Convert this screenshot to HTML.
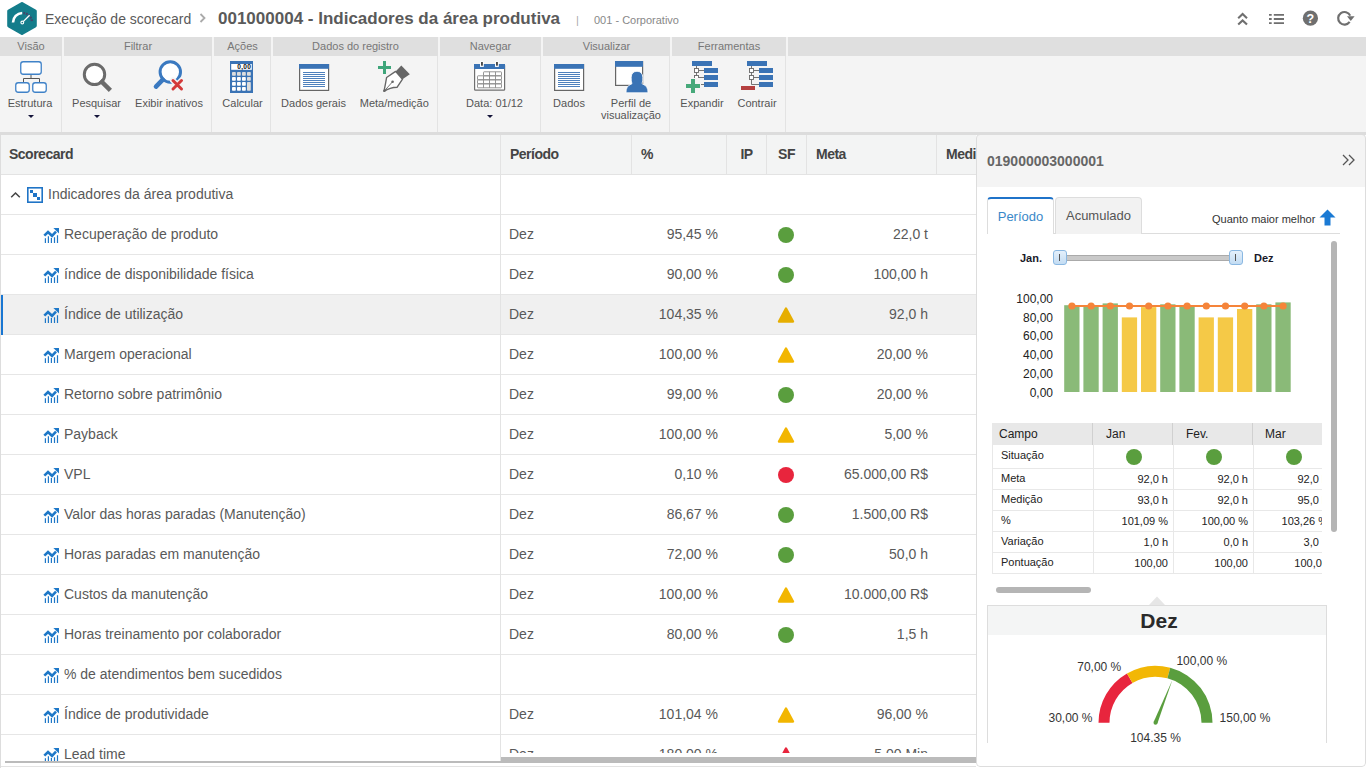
<!DOCTYPE html>
<html><head><meta charset="utf-8">
<style>
*{box-sizing:border-box;margin:0;padding:0}
html,body{width:1366px;height:768px;overflow:hidden;background:#fff;font-family:"Liberation Sans",sans-serif;position:relative}
.abs{position:absolute}
.t{position:absolute;white-space:nowrap;line-height:1}
#hdr{position:absolute;left:0;top:0;width:1366px;height:37px;background:#fff}
#rib{position:absolute;left:0;top:37px;width:1366px;height:98px;background:#f4f4f4;border-bottom:3px solid #dcdcdc;z-index:2}
.lab{position:absolute;top:0;height:19px;background:#dfdfdf;color:#777;font-size:11px;text-align:center;line-height:19px;white-space:nowrap}
.sep{position:absolute;top:19px;height:76px;width:1px;background:#e3e3e3}
.bl{position:absolute;top:61px;transform:translateX(-50%);text-align:center;color:#555;font-size:11px;line-height:11.5px;white-space:nowrap}
.caret{position:absolute;width:0;height:0;border-left:3px solid transparent;border-right:3px solid transparent;border-top:3px solid #14143a}
#tbl{position:absolute;left:0;top:134px;width:976px;height:634px;background:#fff;overflow:hidden;border-left:1px solid #ddd}
.hrow{position:absolute;left:-1px;top:0;width:977px;height:41px;background:#f3f4f4;border-bottom:1px solid #e3e3e3}
.hc{position:absolute;top:0;height:40px;line-height:40px;font-size:14px;font-weight:bold;color:#444;letter-spacing:-0.5px;padding-left:9px;white-space:nowrap}
.hsep{position:absolute;top:0;height:40px;width:1px;background:#e3e3e3}
.row{position:absolute;left:-1px;width:977px;height:40px;border-bottom:1px solid #e6e6e6;background:#fff}
.row.sel{background:#f0f0f0}
.row.sel::before{content:"";position:absolute;left:1px;top:0;width:2px;height:40px;background:#1976d2}
.vsep{position:absolute;left:500px;top:0;width:1px;height:40px;background:#e3e3e3}
.cell{position:absolute;top:-1px;height:40px;line-height:40px;font-size:14px;color:#595959;white-space:nowrap}
.cell.r{text-align:right}
.ic{left:43px;top:13px}
.dot{position:absolute;left:778px;top:12px;width:16px;height:16px;border-radius:50%}
.tri{left:777px;top:11px}
.sel .tri path{fill:#e6ae00;stroke:#e6ae00}
#pnl{position:absolute;left:976px;top:134px;width:390px;height:633px;background:#fff;border-radius:4px;overflow:hidden}
#pnl::after{content:"";position:absolute;left:0;top:0;right:0;bottom:0;border:1px solid #ddd;border-radius:4px;pointer-events:none}
.phdr{position:absolute;left:0;top:0;width:390px;height:53px;background:#f4f4f4}
.tabline{position:absolute;left:11px;top:99px;width:353px;height:1px;background:#ddd}
.tab{position:absolute;top:63px;height:37px;border:1px solid #ddd;border-bottom:none;border-radius:4px 4px 0 0;background:#f2f2f2;color:#555;font-size:13px;text-align:center;line-height:36px}
.tab.act{background:#fff;border-top:2px solid #1f73c9;color:#3a88c8;height:37px;line-height:35px}
.handle{position:absolute;top:116px;width:14px;height:15px;border:1px solid #8ab8e2;border-radius:3px;background:linear-gradient(#e4f0fb,#c3dcf3)}
.handle::after{content:"";position:absolute;left:5px;top:3px;width:1px;height:7px;background:#555}
.dt{position:absolute;left:16px;top:289px;width:330px;height:152px;overflow:hidden}
.dhr{position:absolute;left:0;top:0;width:340px;height:22px;background:#e8e8e8}
.dh{position:absolute;top:0;height:22px;line-height:22px;font-size:12px;color:#222;padding-left:8px;border-right:1px solid #d0d0d0}
.dh:first-child{padding-left:7px}
.drow{position:absolute;left:0;width:340px;border-bottom:1px solid #e8e8e8;border-left:1px solid #e8e8e8}
.dc{position:absolute;top:0;height:100%;font-size:11px;color:#222;white-space:nowrap;border-right:1px solid #e8e8e8;overflow:hidden}
.gdot{position:absolute;width:16px;height:16px;border-radius:50%;background:#5a9e3e}
.gbox{position:absolute;left:11px;top:471px;width:340px;height:138px;border:1px solid #ddd;border-bottom:none}
.ghdr{height:29px;background:#f4f5f5;text-align:center;font-size:21px;font-weight:bold;color:#2a2a2a;line-height:29px;padding-left:4px}
</style></head><body>
<div id="hdr">
  <svg class="abs" style="left:7px;top:2px" width="30" height="33" viewBox="0 0 30 33">
    <path d="M15 1.6 L28.2 9.2 L28.2 23.8 L15 31.4 L1.8 23.8 L1.8 9.2 Z" fill="#147d8b" stroke="#147d8b" stroke-linejoin="round" stroke-width="3.2"/>
    <path d="M6 20.5 A9.5 9.5 0 0 1 15.2 11" fill="none" stroke="#fff" stroke-width="2.6"/>
    <path d="M16.3 11.05 A9.5 9.5 0 0 1 25 19.8" fill="none" stroke="#43466a" stroke-width="2.4" stroke-dasharray="1.8 0.9"/>
    <path d="M16.2 19.6 L22.6 13.2" stroke="#fff" stroke-width="1.3"/>
    <circle cx="15.3" cy="20.5" r="1.4" fill="#147d8b" stroke="#fff" stroke-width="1.1"/>
  </svg>
  <div class="t" style="left:45px;top:12px;font-size:14px;color:#5a5a5a">Execução de scorecard</div>
  <svg class="abs" style="left:199px;top:13px" width="8" height="10" viewBox="0 0 8 10"><path d="M1.5 1 L5.5 5 L1.5 9" fill="none" stroke="#aaa" stroke-width="1.8"/></svg>
  <div class="t" style="left:218px;top:10px;font-size:17px;font-weight:bold;color:#5a5a5a">001000004 - Indicadores da área produtiva</div>
  <div class="t" style="left:576px;top:15px;font-size:11px;color:#aaa">|</div>
  <div class="t" style="left:594px;top:15px;font-size:11px;color:#888">001 - Corporativo</div>
  <!-- right icons -->
  <svg class="abs" style="left:1236px;top:11px" width="14" height="16" viewBox="0 0 14 16"><path d="M2.2 7.2 L6.6 3 L11 7.2 M2.2 13.6 L6.6 9.4 L11 13.6" fill="none" stroke="#6f6f6f" stroke-width="2.1"/></svg>
  <svg class="abs" style="left:1269px;top:13px" width="16" height="12" viewBox="0 0 16 12"><path d="M0 1.9 H2.7 M4.8 1.9 H15 M0 6 H2.7 M4.8 6 H15 M0 10.1 H2.7 M4.8 10.1 H15" stroke="#6f6f6f" stroke-width="1.9"/></svg>
  <svg class="abs" style="left:1302px;top:10px" width="17" height="17" viewBox="0 0 17 17"><circle cx="8.4" cy="8.2" r="7.6" fill="#6f6f6f"/><text x="8.4" y="12.8" text-anchor="middle" font-size="12.5" font-weight="bold" fill="#fff" font-family="Liberation Sans">?</text></svg>
  <svg class="abs" style="left:1334px;top:8px" width="22" height="20" viewBox="1334 8 22 20"><path d="M1349.66 21.91 A6.3 6.3 0 1 1 1350.2 15.64" fill="none" stroke="#6f6f6f" stroke-width="2.2"/><path d="M1347 16.3 L1354.6 16.3 L1350.8 21 Z" fill="#6f6f6f"/></svg>
</div>
<div id="rib">
  <!-- label bands -->
  <div class="lab" style="left:0px;width:62px">Visão</div>
  <div class="lab" style="left:64px;width:148px">Filtrar</div>
  <div class="lab" style="left:214px;width:57px">Ações</div>
  <div class="lab" style="left:273px;width:165px">Dados do registro</div>
  <div class="lab" style="left:440px;width:101px">Navegar</div>
  <div class="lab" style="left:543px;width:127px">Visualizar</div>
  <div class="lab" style="left:672px;width:114px">Ferramentas</div>
  <div class="lab" style="left:788px;width:578px"></div>
  <!-- separators -->
  <div class="sep" style="left:61px"></div>
  <div class="sep" style="left:211px"></div>
  <div class="sep" style="left:270px"></div>
  <div class="sep" style="left:437px"></div>
  <div class="sep" style="left:540px"></div>
  <div class="sep" style="left:669px"></div>
  <div class="sep" style="left:785px"></div>
  <!-- button labels -->
  <div class="bl" style="left:30px">Estrutura</div>
  <div class="caret" style="left:28px;top:78px"></div>
  <div class="bl" style="left:96.5px">Pesquisar</div>
  <div class="caret" style="left:94px;top:78px"></div>
  <div class="bl" style="left:169px">Exibir inativos</div>
  <div class="bl" style="left:242.5px">Calcular</div>
  <div class="bl" style="left:313.5px">Dados gerais</div>
  <div class="bl" style="left:394.3px">Meta/medição</div>
  <div class="bl" style="left:494.5px">Data: 01/12</div>
  <div class="caret" style="left:487px;top:78px"></div>
  <div class="bl" style="left:569px">Dados</div>
  <div class="bl" style="left:631px">Perfil de<br>visualização</div>
  <div class="bl" style="left:702px">Expandir</div>
  <div class="bl" style="left:757px">Contrair</div>
</div>
<!-- ribbon icons (absolute page coords) -->
<svg class="abs" style="left:0;top:56px;z-index:3" width="800" height="40" viewBox="0 56 800 40">
  <!-- Estrutura -->
  <g fill="#fff" stroke="#3f82c8" stroke-width="1.3">
    <rect x="20.75" y="61.75" width="20.5" height="12.5" rx="2.5"/>
    <rect x="15.75" y="82.75" width="13.5" height="9.5" rx="2.5"/>
    <rect x="32.75" y="82.75" width="13.5" height="9.5" rx="2.5"/>
  </g>
  <path d="M31 75 V78.5 M23.5 82 V78.5 H39.5 V82" fill="none" stroke="#555" stroke-width="1"/>
  <!-- Pesquisar -->
  <circle cx="94.5" cy="74.4" r="10.2" fill="#fff" stroke="#6b6b6b" stroke-width="3"/>
  <path d="M102 82 L108.8 88.8" stroke="#6b6b6b" stroke-width="4.5" stroke-linecap="square"/>
  <!-- Exibir inativos -->
  <circle cx="170.3" cy="72" r="10.2" fill="#fff" stroke="#3a79c0" stroke-width="3"/>
  <path d="M162.8 79.6 L156 86.6" stroke="#3a79c0" stroke-width="4.6" stroke-linecap="round"/>
  <path d="M173 80.5 L181.5 89 M181.5 80.5 L173 89" stroke="#f4f4f4" stroke-width="6" stroke-linecap="round"/>
  <path d="M173 80.5 L181.5 89 M181.5 80.5 L173 89" stroke="#d43a3a" stroke-width="3" stroke-linecap="round"/>
  <!-- Calcular -->
  <rect x="230" y="61" width="23" height="32" fill="#3a73b5"/>
  <rect x="231.2" y="64" width="20.6" height="5.8" fill="#fff"/>
  <text x="251.3" y="69" font-family="Liberation Sans" font-weight="bold" font-size="6.6" letter-spacing="0.3" text-anchor="end" fill="#111">0,00</text>
  <g fill="#fff">
    <rect x="232" y="72" width="3.8" height="3.8" rx="0.8" fill="#ddd"/><rect x="237" y="72" width="3.8" height="3.8" rx="0.8" fill="#ddd"/><rect x="242" y="72" width="3.8" height="3.8" rx="0.8" fill="#ddd"/><rect x="247" y="72" width="3.8" height="3.8" rx="0.8" fill="#ddd"/>
    <rect x="232" y="77" width="3.8" height="3.8" rx="0.8"/><rect x="237" y="77" width="3.8" height="3.8" rx="0.8"/><rect x="242" y="77" width="3.8" height="3.8" rx="0.8"/><rect x="247" y="77" width="3.8" height="3.8" rx="0.8" fill="#ddd"/>
    <rect x="232" y="82" width="3.8" height="3.8" rx="0.8"/><rect x="237" y="82" width="3.8" height="3.8" rx="0.8"/><rect x="242" y="82" width="3.8" height="3.8" rx="0.8"/><rect x="247" y="82" width="3.8" height="8.8" rx="0.8" fill="#ddd"/>
    <rect x="232" y="87" width="3.8" height="3.8" rx="0.8"/><rect x="237" y="87" width="3.8" height="3.8" rx="0.8"/><rect x="242" y="87" width="3.8" height="3.8" rx="0.8"/>
  </g>
  <!-- Dados gerais -->
  <g id="dg">
    <rect x="299.6" y="64.6" width="29" height="25.8" fill="#fff" stroke="#666" stroke-width="1.2"/>
    <rect x="299" y="64" width="30" height="4.8" fill="#3a73b5"/>
    <path d="M303 72.5 H325 M303 74.5 H325 M303 76.5 H325 M303 78.5 H325 M303 80.5 H325 M303 82.5 H325 M303 84.5 H325 M303 86.5 H325" stroke="#3a73b5" stroke-width="0.9"/>
  </g>
  <!-- Meta/medicao -->
  <path d="M378 67.5 H391 M384.5 61 V74" stroke="#3ea57a" stroke-width="3"/>
  <path d="M395.6 71.4 L401.3 65.4 L409.8 74.2 L402.5 79.2 Z" fill="#666"/>
  <path d="M395.6 71.4 L402.5 79.2 L397 87.3 Q390 87.6 384 91.3 Q385.5 84 386.6 77.5 Z" fill="#fff" stroke="#666" stroke-width="1.4" stroke-linejoin="round"/>
  <path d="M384.3 91 L392.4 81.9" stroke="#666" stroke-width="0.9"/>
  <circle cx="392.6" cy="81.8" r="1.3" fill="#666"/>
  <circle cx="384.5" cy="90.6" r="1.2" fill="#666"/>
  <!-- Data calendar -->
  <rect x="474.6" y="64.6" width="30" height="25.6" rx="0.8" fill="#fff" stroke="#6f6f6f" stroke-width="1.2"/>
  <rect x="474" y="64" width="31" height="5" fill="#3a73b5"/>
  <rect x="480" y="61.5" width="3.8" height="5.4" fill="#fff"/><rect x="495" y="61.5" width="3.8" height="5.4" fill="#fff"/>
  <rect x="481" y="62" width="1.9" height="3.7" fill="#4a4a4a"/><rect x="496" y="62" width="1.9" height="3.7" fill="#4a4a4a"/>
  <g fill="none" stroke="#8a8a8a" stroke-width="0.9">
    <rect x="483.5" y="71.8" width="18" height="4" rx="0.6"/>
    <rect x="477.5" y="75.8" width="24" height="4" rx="0.6"/>
    <rect x="477.5" y="79.8" width="24" height="4" rx="0.6"/>
    <rect x="477.5" y="83.8" width="24" height="4" rx="0.6"/>
    <path d="M483.5 75.8 V87.8 M489.5 71.8 V87.8 M495.5 71.8 V87.8"/>
  </g>
  <!-- Dados -->
  <use href="#dg" x="255" y="0"/>
  <!-- Perfil -->
  <rect x="615.6" y="61.6" width="27" height="23.8" fill="#fff" stroke="#666" stroke-width="1.2"/>
  <rect x="615" y="61" width="28" height="5.8" fill="#3a73b5"/>
  <circle cx="637" cy="77" r="5.6" fill="#fff"/>
  <path d="M626 92.8 Q625.8 85.8 631.5 84 L632 83.6 Q631 81.5 631.2 77.2 Q631.5 71.5 637 71.3 Q642.5 71.5 642.8 77.2 Q643 81.5 642 83.6 L642.5 84 Q648.2 85.8 648 92.8 Z" fill="#3a73b5" stroke="#fff" stroke-width="0.8"/>
  <!-- Expandir -->
  <g id="tree">
    <rect x="692" y="61" width="20" height="5" fill="#3a73b5"/>
    <rect x="704" y="68" width="14" height="5" fill="#3a73b5"/>
    <rect x="704" y="75" width="14" height="5" fill="#3a73b5"/>
    <rect x="704" y="82" width="14" height="5" fill="#3a73b5"/>
    <path d="M696.5 66 V84.5 H704 M699 70.5 H704 M699 77.5 H704" fill="none" stroke="#666" stroke-width="0.9"/>
    <rect x="694.5" y="68.5" width="4" height="4" fill="#fff" stroke="#666" stroke-width="0.9"/>
    <rect x="694.5" y="75.5" width="4" height="4" fill="#fff" stroke="#666" stroke-width="0.9"/>
  </g>
  <rect x="685" y="78" width="16" height="16" fill="#f4f4f4"/>
  <path d="M686 86 H700 M693 79 V93" stroke="#47a97a" stroke-width="4"/>
  <!-- Contrair -->
  <use href="#tree" x="55" y="0"/>
  <rect x="740" y="85" width="16" height="6" fill="#f4f4f4"/>
  <rect x="741" y="86" width="14" height="4" fill="#b54040"/>
</svg>
<div id="tbl">
<div class="hrow">
<div class="hc" style="left:0px;width:500px;text-align:left">Scorecard</div>
<div class="hc" style="left:501px;width:130px;text-align:left">Período</div>
<div class="hc" style="left:632px;width:94px;text-align:left">%</div>
<div class="hc" style="left:727px;width:39px;text-align:center;padding-left:0">IP</div>
<div class="hc" style="left:767px;width:39px;text-align:center;padding-left:0">SF</div>
<div class="hc" style="left:807px;width:129px;text-align:left">Meta</div>
<div class="hc" style="left:937px;width:60px;text-align:left">Medi</div>
<div class="hsep" style="left:500px"></div>
<div class="hsep" style="left:631px"></div>
<div class="hsep" style="left:726px"></div>
<div class="hsep" style="left:766px"></div>
<div class="hsep" style="left:806px"></div>
<div class="hsep" style="left:936px"></div>
</div>
<div class="row" style="top:41px"><div class="vsep"></div>
<svg class="abs" style="left:10px;top:14.5px" width="12" height="10" viewBox="0 0 12 10"><path d="M1.2 7.3 L5.5 3 L9.8 7.3" fill="none" stroke="#444" stroke-width="1.5"/></svg>
<svg class="abs" style="left:27px;top:12px" width="16" height="16" viewBox="0 0 16 16"><rect x="0.8" y="0.8" width="14.4" height="14.4" fill="#fff" stroke="#1f74c6" stroke-width="1.6"/><rect x="3" y="3" width="3" height="3" fill="#1f74c6"/><rect x="6" y="6" width="4" height="4" fill="#1f74c6"/><rect x="10" y="10" width="3" height="3" fill="#1f74c6"/></svg>
<div class="cell" style="left:48px">Indicadores da área produtiva</div></div>
<div class="row" style="top:81px"><div class="vsep"></div><svg class="abs ic" width="16" height="16" viewBox="0 0 16 16"><path d="M1.3 7.6 L5 4 L9 7.8 L13 3.6" fill="none" stroke="#1e78c8" stroke-width="2.6" stroke-linejoin="miter"/><path d="M10.4 0 H16 V5.6 Z" fill="#1e78c8"/><path d="M2.4 10.2 V15 M5.4 8.2 V15 M8.4 10 V15 M11.5 9.2 V15 M14.5 7.2 V15" stroke="#1e78c8" stroke-width="1.2"/></svg>
<div class="cell" style="left:64px">Recuperação de produto</div>
<div class="cell" style="left:509px">Dez</div>
<div class="cell r" style="right:259px">95,45 %</div>
<div class="dot" style="background:#5a9e3e"></div>
<div class="cell r" style="right:49px">22,0 t</div>
</div>
<div class="row" style="top:121px"><div class="vsep"></div><svg class="abs ic" width="16" height="16" viewBox="0 0 16 16"><path d="M1.3 7.6 L5 4 L9 7.8 L13 3.6" fill="none" stroke="#1e78c8" stroke-width="2.6" stroke-linejoin="miter"/><path d="M10.4 0 H16 V5.6 Z" fill="#1e78c8"/><path d="M2.4 10.2 V15 M5.4 8.2 V15 M8.4 10 V15 M11.5 9.2 V15 M14.5 7.2 V15" stroke="#1e78c8" stroke-width="1.2"/></svg>
<div class="cell" style="left:64px">índice de disponibilidade física</div>
<div class="cell" style="left:509px">Dez</div>
<div class="cell r" style="right:259px">90,00 %</div>
<div class="dot" style="background:#5a9e3e"></div>
<div class="cell r" style="right:49px">100,00 h</div>
</div>
<div class="row sel" style="top:161px"><div class="vsep"></div><svg class="abs ic" width="16" height="16" viewBox="0 0 16 16"><path d="M1.3 7.6 L5 4 L9 7.8 L13 3.6" fill="none" stroke="#1e78c8" stroke-width="2.6" stroke-linejoin="miter"/><path d="M10.4 0 H16 V5.6 Z" fill="#1e78c8"/><path d="M2.4 10.2 V15 M5.4 8.2 V15 M8.4 10 V15 M11.5 9.2 V15 M14.5 7.2 V15" stroke="#1e78c8" stroke-width="1.2"/></svg>
<div class="cell" style="left:64px">Índice de utilização</div>
<div class="cell" style="left:509px">Dez</div>
<div class="cell r" style="right:259px">104,35 %</div>
<svg class="abs tri" width="18" height="18" viewBox="0 0 18 18"><path d="M9 2.5 L16 15.5 H2 Z" fill="#f2b600" stroke="#f2b600" stroke-width="2.4" stroke-linejoin="round"/></svg>
<div class="cell r" style="right:49px">92,0 h</div>
</div>
<div class="row" style="top:201px"><div class="vsep"></div><svg class="abs ic" width="16" height="16" viewBox="0 0 16 16"><path d="M1.3 7.6 L5 4 L9 7.8 L13 3.6" fill="none" stroke="#1e78c8" stroke-width="2.6" stroke-linejoin="miter"/><path d="M10.4 0 H16 V5.6 Z" fill="#1e78c8"/><path d="M2.4 10.2 V15 M5.4 8.2 V15 M8.4 10 V15 M11.5 9.2 V15 M14.5 7.2 V15" stroke="#1e78c8" stroke-width="1.2"/></svg>
<div class="cell" style="left:64px">Margem operacional</div>
<div class="cell" style="left:509px">Dez</div>
<div class="cell r" style="right:259px">100,00 %</div>
<svg class="abs tri" width="18" height="18" viewBox="0 0 18 18"><path d="M9 2.5 L16 15.5 H2 Z" fill="#f2b600" stroke="#f2b600" stroke-width="2.4" stroke-linejoin="round"/></svg>
<div class="cell r" style="right:49px">20,00 %</div>
</div>
<div class="row" style="top:241px"><div class="vsep"></div><svg class="abs ic" width="16" height="16" viewBox="0 0 16 16"><path d="M1.3 7.6 L5 4 L9 7.8 L13 3.6" fill="none" stroke="#1e78c8" stroke-width="2.6" stroke-linejoin="miter"/><path d="M10.4 0 H16 V5.6 Z" fill="#1e78c8"/><path d="M2.4 10.2 V15 M5.4 8.2 V15 M8.4 10 V15 M11.5 9.2 V15 M14.5 7.2 V15" stroke="#1e78c8" stroke-width="1.2"/></svg>
<div class="cell" style="left:64px">Retorno sobre patrimônio</div>
<div class="cell" style="left:509px">Dez</div>
<div class="cell r" style="right:259px">99,00 %</div>
<div class="dot" style="background:#5a9e3e"></div>
<div class="cell r" style="right:49px">20,00 %</div>
</div>
<div class="row" style="top:281px"><div class="vsep"></div><svg class="abs ic" width="16" height="16" viewBox="0 0 16 16"><path d="M1.3 7.6 L5 4 L9 7.8 L13 3.6" fill="none" stroke="#1e78c8" stroke-width="2.6" stroke-linejoin="miter"/><path d="M10.4 0 H16 V5.6 Z" fill="#1e78c8"/><path d="M2.4 10.2 V15 M5.4 8.2 V15 M8.4 10 V15 M11.5 9.2 V15 M14.5 7.2 V15" stroke="#1e78c8" stroke-width="1.2"/></svg>
<div class="cell" style="left:64px">Payback</div>
<div class="cell" style="left:509px">Dez</div>
<div class="cell r" style="right:259px">100,00 %</div>
<svg class="abs tri" width="18" height="18" viewBox="0 0 18 18"><path d="M9 2.5 L16 15.5 H2 Z" fill="#f2b600" stroke="#f2b600" stroke-width="2.4" stroke-linejoin="round"/></svg>
<div class="cell r" style="right:49px">5,00 %</div>
</div>
<div class="row" style="top:321px"><div class="vsep"></div><svg class="abs ic" width="16" height="16" viewBox="0 0 16 16"><path d="M1.3 7.6 L5 4 L9 7.8 L13 3.6" fill="none" stroke="#1e78c8" stroke-width="2.6" stroke-linejoin="miter"/><path d="M10.4 0 H16 V5.6 Z" fill="#1e78c8"/><path d="M2.4 10.2 V15 M5.4 8.2 V15 M8.4 10 V15 M11.5 9.2 V15 M14.5 7.2 V15" stroke="#1e78c8" stroke-width="1.2"/></svg>
<div class="cell" style="left:64px">VPL</div>
<div class="cell" style="left:509px">Dez</div>
<div class="cell r" style="right:259px">0,10 %</div>
<div class="dot" style="background:#e8253d"></div>
<div class="cell r" style="right:49px">65.000,00 R$</div>
</div>
<div class="row" style="top:361px"><div class="vsep"></div><svg class="abs ic" width="16" height="16" viewBox="0 0 16 16"><path d="M1.3 7.6 L5 4 L9 7.8 L13 3.6" fill="none" stroke="#1e78c8" stroke-width="2.6" stroke-linejoin="miter"/><path d="M10.4 0 H16 V5.6 Z" fill="#1e78c8"/><path d="M2.4 10.2 V15 M5.4 8.2 V15 M8.4 10 V15 M11.5 9.2 V15 M14.5 7.2 V15" stroke="#1e78c8" stroke-width="1.2"/></svg>
<div class="cell" style="left:64px">Valor das horas paradas (Manutenção)</div>
<div class="cell" style="left:509px">Dez</div>
<div class="cell r" style="right:259px">86,67 %</div>
<div class="dot" style="background:#5a9e3e"></div>
<div class="cell r" style="right:49px">1.500,00 R$</div>
</div>
<div class="row" style="top:401px"><div class="vsep"></div><svg class="abs ic" width="16" height="16" viewBox="0 0 16 16"><path d="M1.3 7.6 L5 4 L9 7.8 L13 3.6" fill="none" stroke="#1e78c8" stroke-width="2.6" stroke-linejoin="miter"/><path d="M10.4 0 H16 V5.6 Z" fill="#1e78c8"/><path d="M2.4 10.2 V15 M5.4 8.2 V15 M8.4 10 V15 M11.5 9.2 V15 M14.5 7.2 V15" stroke="#1e78c8" stroke-width="1.2"/></svg>
<div class="cell" style="left:64px">Horas paradas em manutenção</div>
<div class="cell" style="left:509px">Dez</div>
<div class="cell r" style="right:259px">72,00 %</div>
<div class="dot" style="background:#5a9e3e"></div>
<div class="cell r" style="right:49px">50,0 h</div>
</div>
<div class="row" style="top:441px"><div class="vsep"></div><svg class="abs ic" width="16" height="16" viewBox="0 0 16 16"><path d="M1.3 7.6 L5 4 L9 7.8 L13 3.6" fill="none" stroke="#1e78c8" stroke-width="2.6" stroke-linejoin="miter"/><path d="M10.4 0 H16 V5.6 Z" fill="#1e78c8"/><path d="M2.4 10.2 V15 M5.4 8.2 V15 M8.4 10 V15 M11.5 9.2 V15 M14.5 7.2 V15" stroke="#1e78c8" stroke-width="1.2"/></svg>
<div class="cell" style="left:64px">Custos da manutenção</div>
<div class="cell" style="left:509px">Dez</div>
<div class="cell r" style="right:259px">100,00 %</div>
<svg class="abs tri" width="18" height="18" viewBox="0 0 18 18"><path d="M9 2.5 L16 15.5 H2 Z" fill="#f2b600" stroke="#f2b600" stroke-width="2.4" stroke-linejoin="round"/></svg>
<div class="cell r" style="right:49px">10.000,00 R$</div>
</div>
<div class="row" style="top:481px"><div class="vsep"></div><svg class="abs ic" width="16" height="16" viewBox="0 0 16 16"><path d="M1.3 7.6 L5 4 L9 7.8 L13 3.6" fill="none" stroke="#1e78c8" stroke-width="2.6" stroke-linejoin="miter"/><path d="M10.4 0 H16 V5.6 Z" fill="#1e78c8"/><path d="M2.4 10.2 V15 M5.4 8.2 V15 M8.4 10 V15 M11.5 9.2 V15 M14.5 7.2 V15" stroke="#1e78c8" stroke-width="1.2"/></svg>
<div class="cell" style="left:64px">Horas treinamento por colaborador</div>
<div class="cell" style="left:509px">Dez</div>
<div class="cell r" style="right:259px">80,00 %</div>
<div class="dot" style="background:#5a9e3e"></div>
<div class="cell r" style="right:49px">1,5 h</div>
</div>
<div class="row" style="top:521px"><div class="vsep"></div><svg class="abs ic" width="16" height="16" viewBox="0 0 16 16"><path d="M1.3 7.6 L5 4 L9 7.8 L13 3.6" fill="none" stroke="#1e78c8" stroke-width="2.6" stroke-linejoin="miter"/><path d="M10.4 0 H16 V5.6 Z" fill="#1e78c8"/><path d="M2.4 10.2 V15 M5.4 8.2 V15 M8.4 10 V15 M11.5 9.2 V15 M14.5 7.2 V15" stroke="#1e78c8" stroke-width="1.2"/></svg>
<div class="cell" style="left:64px">% de atendimentos bem sucedidos</div>
</div>
<div class="row" style="top:561px"><div class="vsep"></div><svg class="abs ic" width="16" height="16" viewBox="0 0 16 16"><path d="M1.3 7.6 L5 4 L9 7.8 L13 3.6" fill="none" stroke="#1e78c8" stroke-width="2.6" stroke-linejoin="miter"/><path d="M10.4 0 H16 V5.6 Z" fill="#1e78c8"/><path d="M2.4 10.2 V15 M5.4 8.2 V15 M8.4 10 V15 M11.5 9.2 V15 M14.5 7.2 V15" stroke="#1e78c8" stroke-width="1.2"/></svg>
<div class="cell" style="left:64px">Índice de produtividade</div>
<div class="cell" style="left:509px">Dez</div>
<div class="cell r" style="right:259px">101,04 %</div>
<svg class="abs tri" width="18" height="18" viewBox="0 0 18 18"><path d="M9 2.5 L16 15.5 H2 Z" fill="#f2b600" stroke="#f2b600" stroke-width="2.4" stroke-linejoin="round"/></svg>
<div class="cell r" style="right:49px">96,00 %</div>
</div>
<div class="row" style="top:601px"><div class="vsep"></div><svg class="abs ic" width="16" height="16" viewBox="0 0 16 16"><path d="M1.3 7.6 L5 4 L9 7.8 L13 3.6" fill="none" stroke="#1e78c8" stroke-width="2.6" stroke-linejoin="miter"/><path d="M10.4 0 H16 V5.6 Z" fill="#1e78c8"/><path d="M2.4 10.2 V15 M5.4 8.2 V15 M8.4 10 V15 M11.5 9.2 V15 M14.5 7.2 V15" stroke="#1e78c8" stroke-width="1.2"/></svg>
<div class="cell" style="left:64px">Lead time</div>
<div class="cell" style="left:509px">Dez</div>
<div class="cell r" style="right:259px">180,00 %</div>
<svg class="abs tri" width="18" height="18" viewBox="0 0 18 18"><path d="M9 2.5 L16 15.5 H2 Z" fill="#e8253d" stroke="#e8253d" stroke-width="2.4" stroke-linejoin="round"/></svg>
<div class="cell r" style="right:49px">5,00 Min</div>
</div>
<div class="abs" style="left:-1px;top:629px;width:977px;height:5px;background:#fff"></div>
<div class="abs" style="left:-1px;top:632px;width:977px;height:1px;background:#e3e3e3"></div>
<div class="abs" style="left:4px;top:627px;width:496px;height:2px;background:#bbb"></div>
<div class="abs" style="left:500px;top:619px;width:476px;height:4px;background:#fff"></div>
<div class="abs" style="left:500px;top:623px;width:476px;height:6px;background:#bbb"></div>
</div><div id="pnl">
<div class="phdr"><div class="t" style="left:11px;top:20px;font-size:14px;font-weight:bold;color:#666">019000003000001</div>
<svg class="abs" style="left:366px;top:20px" width="14" height="12" viewBox="0 0 14 12"><path d="M1 1 L6 6 L1 11 M7 1 L12 6 L7 11" fill="none" stroke="#555" stroke-width="1.3"/></svg></div>
<div class="tabline"></div>
<div class="tab act" style="left:11px;width:67px">Período</div>
<div class="tab" style="left:79px;width:87px">Acumulado</div>
<div class="t" style="left:236px;top:80px;font-size:11px;color:#333">Quanto maior melhor</div>
<svg class="abs" style="left:343px;top:75px" width="17" height="17" viewBox="0 0 17 17"><path d="M8.5 0.5 L16.5 8.5 H11.5 V16.5 H5.5 V8.5 H0.5 Z" fill="#1a7ad4"/></svg>
<div class="t" style="left:44px;top:119px;font-size:11px;font-weight:bold;color:#1a1a2a">Jan.</div>
<div class="abs" style="left:85px;top:121px;width:175px;height:6px;background:#c9c9c9;border:1px solid #aaa;border-radius:2px"></div>
<div class="handle" style="left:77px"></div><div class="handle" style="left:253px"></div>
<div class="t" style="left:278px;top:119px;font-size:11px;font-weight:bold;color:#1a1a2a">Dez</div>
<div class="abs" style="left:355px;top:107px;width:6px;height:291px;background:#b5b5b5;border-radius:3px"></div>
<svg class="abs" style="left:0;top:150px" width="360" height="120" viewBox="976 284 360 120">
<text x="1053" y="303.0" text-anchor="end" font-size="12" fill="#222" font-family="Liberation Sans">100,00</text>
<text x="1053" y="321.7" text-anchor="end" font-size="12" fill="#222" font-family="Liberation Sans">80,00</text>
<text x="1053" y="340.4" text-anchor="end" font-size="12" fill="#222" font-family="Liberation Sans">60,00</text>
<text x="1053" y="359.2" text-anchor="end" font-size="12" fill="#222" font-family="Liberation Sans">40,00</text>
<text x="1053" y="377.9" text-anchor="end" font-size="12" fill="#222" font-family="Liberation Sans">20,00</text>
<text x="1053" y="396.6" text-anchor="end" font-size="12" fill="#222" font-family="Liberation Sans">0,00</text>
<rect x="1064.2" y="305.2" width="15.3" height="86.8" fill="#8aba78"/>
<rect x="1083.4" y="306.2" width="15.3" height="85.8" fill="#8aba78"/>
<rect x="1102.6" y="303.4" width="15.3" height="88.6" fill="#8aba78"/>
<rect x="1121.8" y="317.4" width="15.3" height="74.6" fill="#f5c947"/>
<rect x="1141.0" y="307.1" width="15.3" height="84.9" fill="#f5c947"/>
<rect x="1160.2" y="304.3" width="15.3" height="87.7" fill="#8aba78"/>
<rect x="1179.4" y="305.2" width="15.3" height="86.8" fill="#8aba78"/>
<rect x="1198.6" y="317.4" width="15.3" height="74.6" fill="#f5c947"/>
<rect x="1217.8" y="317.4" width="15.3" height="74.6" fill="#f5c947"/>
<rect x="1237.0" y="309.0" width="15.3" height="83.0" fill="#f5c947"/>
<rect x="1256.2" y="304.3" width="15.3" height="87.7" fill="#8aba78"/>
<rect x="1275.4" y="302.4" width="15.3" height="89.6" fill="#8aba78"/>
<path d="M1071.9 306 H1283" stroke="#f5843a" stroke-width="2"/>
<circle cx="1071.9" cy="306" r="3.6" fill="#f5843a"/>
<circle cx="1091.1" cy="306" r="3.6" fill="#f5843a"/>
<circle cx="1110.3" cy="306" r="3.6" fill="#f5843a"/>
<circle cx="1129.5" cy="306" r="3.6" fill="#f5843a"/>
<circle cx="1148.7" cy="306" r="3.6" fill="#f5843a"/>
<circle cx="1167.9" cy="306" r="3.6" fill="#f5843a"/>
<circle cx="1187.1" cy="306" r="3.6" fill="#f5843a"/>
<circle cx="1206.3" cy="306" r="3.6" fill="#f5843a"/>
<circle cx="1225.5" cy="306" r="3.6" fill="#f5843a"/>
<circle cx="1244.7" cy="306" r="3.6" fill="#f5843a"/>
<circle cx="1263.9" cy="306" r="3.6" fill="#f5843a"/>
<circle cx="1283.1" cy="306" r="3.6" fill="#f5843a"/>
</svg>
<div class="dt">
<div class="dhr"><div class="dh" style="left:0;width:101px">Campo</div><div class="dh" style="left:101px;width:80px;padding-left:13px">Jan</div><div class="dh" style="left:181px;width:80px;padding-left:13px">Fev.</div><div class="dh" style="left:261px;width:80px;padding-left:12px">Mar</div></div>
<div class="drow" style="top:22px;height:24px">
<div class="dc" style="left:0;width:101px;line-height:21px;padding-left:8px">Situação</div>
<div class="dc" style="left:101px;width:80px"><div class="gdot" style="left:32px;top:4px"></div></div>
<div class="dc" style="left:181px;width:80px"><div class="gdot" style="left:32px;top:4px"></div></div>
<div class="dc" style="left:261px;width:80px"><div class="gdot" style="left:32px;top:4px"></div></div>
</div>
<div class="drow" style="top:46px;height:21px">
<div class="dc" style="left:0;width:101px;line-height:18px;padding-left:8px">Meta</div>
<div class="dc" style="left:101px;width:80px;line-height:21px;text-align:right;padding-right:5px">92,0 h</div>
<div class="dc" style="left:181px;width:80px;line-height:21px;text-align:right;padding-right:5px">92,0 h</div>
<div class="dc" style="left:261px;width:80px;line-height:21px;text-align:right;padding-right:5px">92,0 h</div>
</div>
<div class="drow" style="top:67px;height:21px">
<div class="dc" style="left:0;width:101px;line-height:18px;padding-left:8px">Medição</div>
<div class="dc" style="left:101px;width:80px;line-height:21px;text-align:right;padding-right:5px">93,0 h</div>
<div class="dc" style="left:181px;width:80px;line-height:21px;text-align:right;padding-right:5px">92,0 h</div>
<div class="dc" style="left:261px;width:80px;line-height:21px;text-align:right;padding-right:5px">95,0 h</div>
</div>
<div class="drow" style="top:88px;height:21px">
<div class="dc" style="left:0;width:101px;line-height:18px;padding-left:8px">%</div>
<div class="dc" style="left:101px;width:80px;line-height:21px;text-align:right;padding-right:5px">101,09 %</div>
<div class="dc" style="left:181px;width:80px;line-height:21px;text-align:right;padding-right:5px">100,00 %</div>
<div class="dc" style="left:261px;width:80px;line-height:21px;text-align:right;padding-right:5px">103,26 %</div>
</div>
<div class="drow" style="top:109px;height:21px">
<div class="dc" style="left:0;width:101px;line-height:18px;padding-left:8px">Variação</div>
<div class="dc" style="left:101px;width:80px;line-height:21px;text-align:right;padding-right:5px">1,0 h</div>
<div class="dc" style="left:181px;width:80px;line-height:21px;text-align:right;padding-right:5px">0,0 h</div>
<div class="dc" style="left:261px;width:80px;line-height:21px;text-align:right;padding-right:5px">3,0 h</div>
</div>
<div class="drow" style="top:130px;height:21px">
<div class="dc" style="left:0;width:101px;line-height:18px;padding-left:8px">Pontuação</div>
<div class="dc" style="left:101px;width:80px;line-height:21px;text-align:right;padding-right:5px">100,00</div>
<div class="dc" style="left:181px;width:80px;line-height:21px;text-align:right;padding-right:5px">100,00</div>
<div class="dc" style="left:261px;width:80px;line-height:21px;text-align:right;padding-right:5px">100,00</div>
</div>
</div>
<div class="abs" style="left:20px;top:453px;width:95px;height:6px;background:#b5b5b5;border-radius:3px"></div>
<svg class="abs" style="left:173px;top:462px" width="16" height="9" viewBox="0 0 16 9"><path d="M0 9 L8 0.5 L16 9 Z" fill="#e6e6e6"/></svg>
<div class="gbox"><div class="ghdr">Dez</div></div>
<svg class="abs" style="left:0;top:500px" width="390" height="120" viewBox="976 634 390 120">
<path d="M1098.50 722.80 A57 57 0 0 1 1127.00 673.44 L1132.50 682.96 A46 46 0 0 0 1109.50 722.80 Z" fill="#e8253d"/>
<path d="M1127.00 673.44 A57 57 0 0 1 1170.25 667.74 L1167.41 678.37 A46 46 0 0 0 1132.50 682.96 Z" fill="#f2b705"/>
<path d="M1170.25 667.74 A57 57 0 0 1 1212.50 722.80 L1201.50 722.80 A46 46 0 0 0 1167.41 678.37 Z" fill="#5a9e3e"/>
<path d="M1153.64 722.07 L1172.36 680.00 L1157.36 723.53 Z" fill="#5a9e3e"/>
<circle cx="1155.50" cy="722.80" r="2" fill="#5a9e3e"/>
<text x="1092.5" y="721.5" text-anchor="end" font-size="12" fill="#333" font-family="Liberation Sans">30,00 %</text>
<text x="1121.3" y="671.2" text-anchor="end" font-size="12" fill="#333" font-family="Liberation Sans">70,00 %</text>
<text x="1176.4" y="664.9" text-anchor="start" font-size="12" fill="#333" font-family="Liberation Sans">100,00 %</text>
<text x="1219.6" y="721.5" text-anchor="start" font-size="12" fill="#333" font-family="Liberation Sans">150,00 %</text>
<text x="1155.5" y="742.1" text-anchor="middle" font-size="12" fill="#333" font-family="Liberation Sans">104.35 %</text>
</svg>
</div></body></html>
